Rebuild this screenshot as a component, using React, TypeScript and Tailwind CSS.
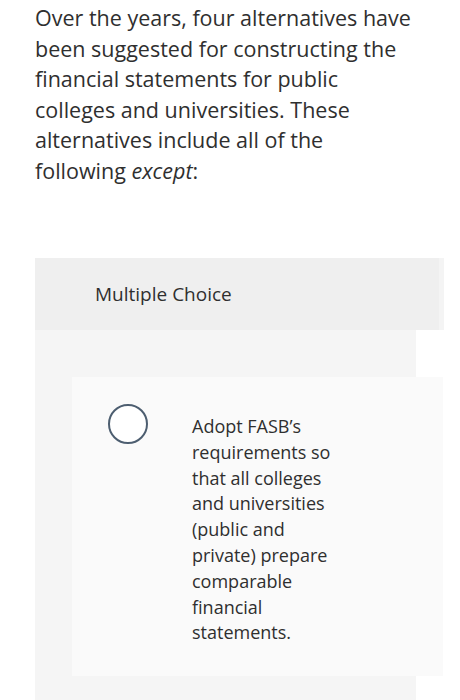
import React from 'react';

const font = { fontFamily: '"Open Sans", "Liberation Sans", sans-serif' };

export default function App() {
  return (
    <div className="w-[460px] h-[700px] overflow-hidden bg-white text-[#2f2f2f]" style={font}>
      <p className="pl-[35px] pt-[3px] text-[21.5px] leading-[30.5px] whitespace-nowrap">
        Over the years, four alternatives have<br />
        been suggested for constructing the<br />
        financial statements for public<br />
        colleges and universities. These<br />
        alternatives include all of the<br />
        following <em>except</em>:
      </p>

      <div className="mt-[72px] ml-[35px] w-[409px]">
        {/* header */}
        <div className="h-[72px] bg-[#efefef] flex items-center pl-[60px] border-r-[5px] border-[#f4f4f4]">
          <span className="text-[19px]">Multiple Choice</span>
        </div>

        {/* body */}
        <div className="w-[381px] bg-[#f5f5f5] pt-[47px] pb-[30px]">
          <div className="ml-[37px] w-[371px] bg-[#fafafa] flex pt-[27px] pb-[30px]">
            <div className="w-[120px] shrink-0 pl-[36px]">
              <div className="w-[40px] h-[40px] rounded-full border-2 border-[#4d5e70] bg-white" />
            </div>
            <p className="text-[18px] leading-[25.8px] mt-[10px] whitespace-nowrap">
              Adopt FASB’s<br />
              requirements so<br />
              that all colleges<br />
              and universities<br />
              (public and<br />
              private) prepare<br />
              comparable<br />
              financial<br />
              statements.
            </p>
          </div>
        </div>
      </div>
    </div>
  );
}
